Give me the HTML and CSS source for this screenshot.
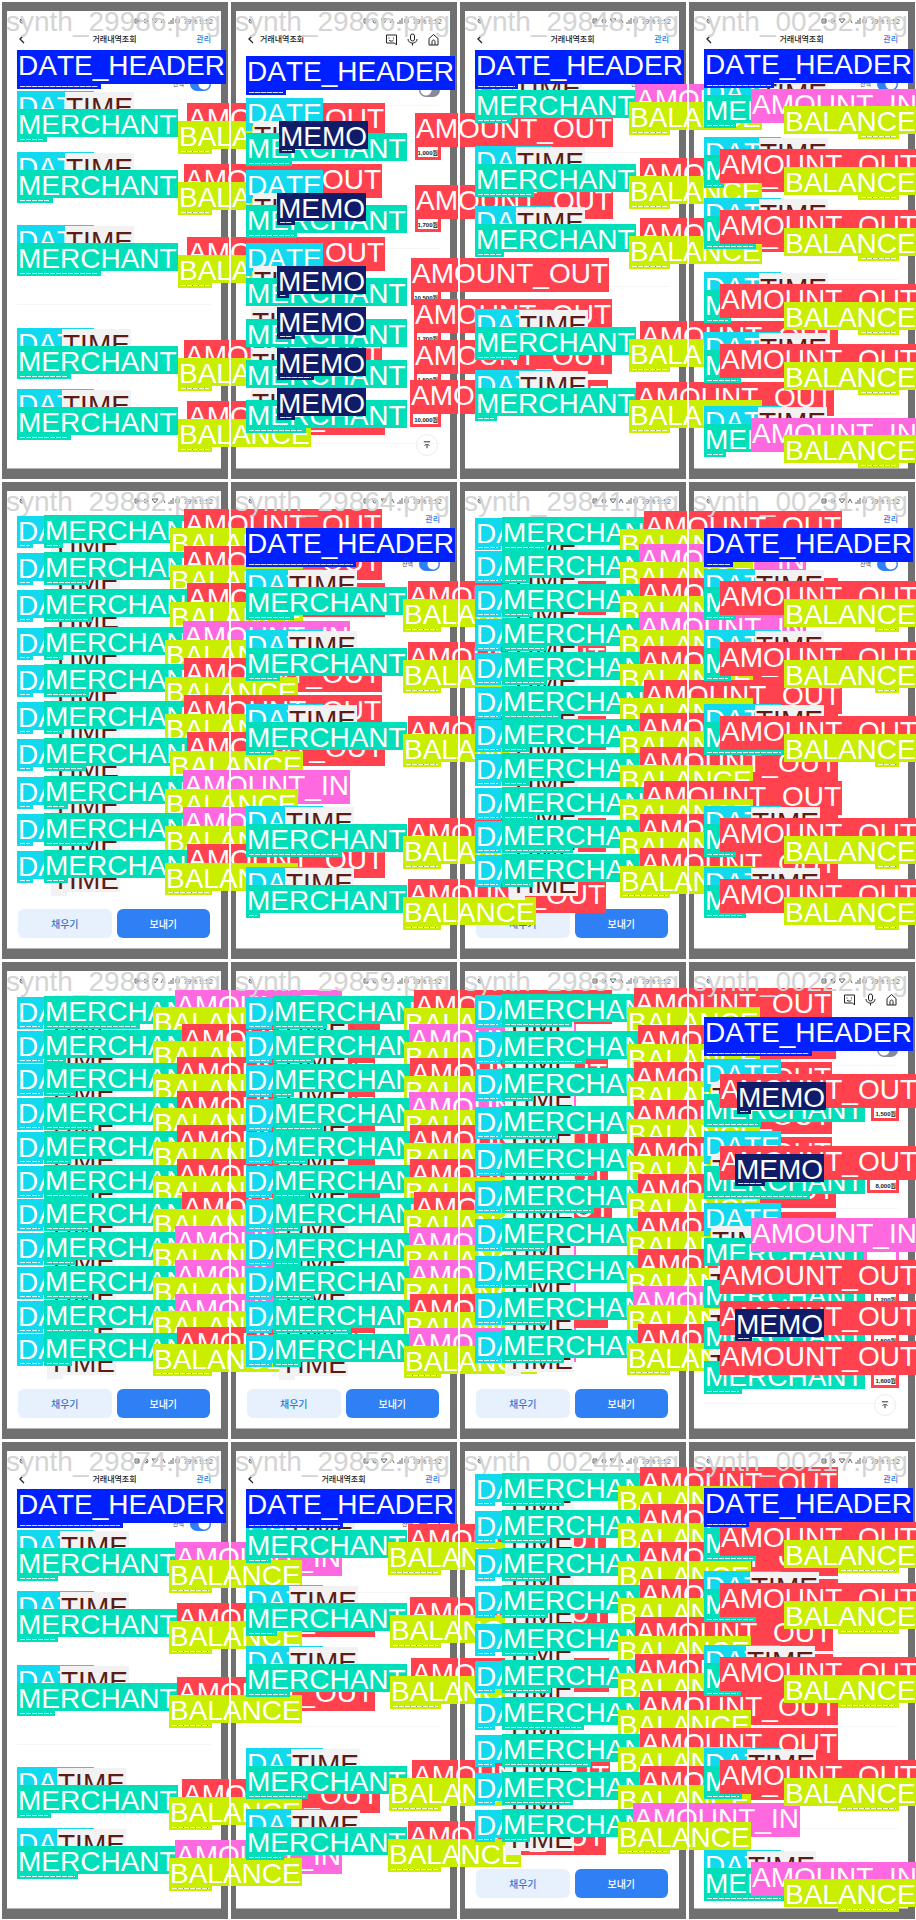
FILE: index.html
```html
<!DOCTYPE html>
<html lang="ko">
<head>
<meta charset="utf-8">
<meta name="viewport" content="width=device-width, initial-scale=1">
<title>거래내역조회</title>
<link rel="stylesheet" href="styles.css">
</head>
<body>
<main class="sheet" id="sheet"></main>
<script src="script.js"></script>
</body>
</html>
```

FILE: styles.css
```css
* { box-sizing: border-box; }
body {
  margin: 0;
  background: #fff;
  font-family: "Liberation Sans", "Noto Sans CJK KR", sans-serif;
}
.sheet {
  display: grid;
  grid-template-columns: repeat(4, 1fr);
  overflow: hidden;
}
.tile {
  position: relative;
  display: flex;
  aspect-ratio: 229 / 480;
  padding: 2px 1px 1px 2px;
}
.tile::after {
  content: "";
  position: absolute;
  z-index: 2;
  top: 0;
  bottom: 0;
  left: 0;
  width: 2px;
  background: #fff;
}
.frame {
  display: flex;
  flex: 1;
  padding: 9px 7px 10px 5px;
  background: #707070;
}
.phone {
  position: relative;
  display: flex;
  flex: 1;
  flex-direction: column;
  background: #fff;
  border-bottom: 1px solid #b4b4b4;
}
.status {
  display: flex;
  align-items: center;
  justify-content: space-between;
  height: 20px;
  padding: 0 8px 0 12px;
  color: #666;
  font-size: 7px;
}
.status-right { display: flex; align-items: center; gap: 3px; }
.status svg { width: 6px; height: 6px; }
.status .signal { width: 28px; }
.appbar {
  display: grid;
  grid-template-columns: 1fr auto 1fr;
  align-items: center;
  height: 16px;
  padding: 0 10px 0 11px;
  color: #222;
}
.appbar.wide { grid-template-columns: auto 1fr auto; gap: 5px; }
.appbar h2 {
  margin: 0;
  font: 500 8px/12px "Noto Sans CJK KR", sans-serif;
}
.back, .tool, .totop {
  display: flex;
  padding: 0;
  border: 0;
  background: none;
  color: inherit;
}
.back svg { width: 8px; height: 10px; }
.tools { display: flex; gap: 8px; }
.tool svg { width: 13px; height: 13px; }
.manage {
  justify-self: end;
  color: #2f7be8;
  font: 500 8px/12px "Noto Sans CJK KR", sans-serif;
  text-decoration: none;
}
.filter {
  display: flex;
  align-items: center;
  justify-content: flex-end;
  gap: 6px;
  height: 14px;
  margin-top: 30px;
  padding-right: 10px;
  color: #444;
  font: 6px/8px "Noto Sans CJK KR", sans-serif;
}
.wide + .filter { margin-top: 36px; }
.filter input {
  appearance: none;
  width: 21px;
  height: 14px;
  margin: 0;
  border-radius: 7px;
  background: radial-gradient(circle at 7px 7px, #fff 5px, #858b98 6px);
}
.filter input:checked { background: radial-gradient(circle at 14px 7px, #fff 5px, #2f80f4 6px); }
.rule {
  position: absolute;
  left: 10px;
  right: 10px;
  height: 1px;
  margin: 0;
  border: 0;
  background: #f6f6f7;
}
.actions {
  display: grid;
  grid-template-columns: 1fr 1fr;
  gap: 5px;
  margin-top: auto;
  padding: 0 11px 10px;
}
.actions button {
  height: 29px;
  padding: 0;
  border: 0;
  border-radius: 6px;
  background: #e6f1fd;
  color: #2f74d8;
  font: 500 10px/14px "Noto Sans CJK KR", sans-serif;
}
.actions .send { background: #3080f5; color: #fff; }
.totop {
  align-items: center;
  justify-content: center;
  width: 22px;
  height: 22px;
  margin: auto 12px 12px auto;
  border: 1px solid #ececec;
  border-radius: 50%;
}
.totop svg { width: 8px; height: 8px; }
.marks {
  position: absolute;
  z-index: 1;
  inset: 0;
}
.name {
  position: absolute;
  top: 5px;
  left: 6px;
  margin: 0;
  color: #d4d4d4;
  font-size: 28px;
  font-kerning: none;
  font-weight: 400;
  line-height: 34px;
  white-space: nowrap;
}
.tag, .box { position: absolute; }
.tag {
  height: 28px;
  padding: 4px 1px 0;
  color: #fff;
  font-size: 28px;
  font-kerning: none;
  line-height: 24px;
  white-space: nowrap;
}
.tall { height: 34px; }
.header { background: #0020ff; }
.date { background: #12d9ee; }
.time { background: #f2f2f2; color: #5a1c14; }
.merchant { background: #00dfb9; }
.out { background: #ff424e; }
.in { background: #ff69df; }
.balance { background: #c9ee00; }
.memo { background: #101c68; }
.box::after {
  content: "";
  position: absolute;
  right: 3px;
  bottom: 2px;
  left: 3px;
  height: 1px;
  background: repeating-linear-gradient(90deg, #fff 0 5px, #7a8a8a 5px 6px);
  opacity: 0.85;
}
.box.time::after { display: none; }
.box.sum {
  display: flex;
  align-items: flex-end;
  justify-content: flex-end;
  border: 3px solid #ff424e;
  border-top-width: 0;
  background: #fff;
  color: #222;
  font: 700 6px/7px "Liberation Sans", "Noto Sans CJK KR", sans-serif;
  white-space: nowrap;
  overflow: hidden;
}
.box.sum.in { border-color: #ff69df; }
.box.sum::after { display: none; }
```

FILE: script.js
```js
const O = 'out', I = 'in';
const TEXT = {
  header: 'DATE_HEADER', date: 'DATE', time: 'TIME', merchant: 'MERCHANT',
  out: 'AMOUNT_OUT', in: 'AMOUNT_IN', balance: 'BALANCE', memo: 'MEMO'
};

/* head: [y, box width]
   list rows:    [merchant y, time x, merchant box width, type, amount x, balance x]
   compact rows: [merchant y, merchant box width, type, amount x, balance x]
   memo rows:    [merchant y, merchant box width, type, amount x, amount, memo x, memo box width, has date] */
const tiles = [
  { name: '29986', kind: 'list', bar: 1, head: [50, 84], rules: [304], rows: [
    [109, 65, 30, O, 187, 178], [170, 65, 36, O, 184, 178], [243, 65, 84, O, 187, 178],
    [346, 62, 54, O, 184, 178], [407, 62, 54, O, 187, 178]] },
  { name: '29866', kind: 'memo', bar: 1, head: [56, 40], rules: [105, 136, 207, 248, 443], rows: [
    [133, 46, O, 186, '1,000원', 50, 16, 1], [205, 51, O, 186, '1,700원', 48, 18, 1], [278, 0, O, 182, '10,500원', 48, 12, 1],
    [319, 0, O, 185, '1,200원', 48, 18, 0], [360, 0, O, 185, '1,500원', 48, 37, 0], [400, 60, O, 181, '10,000원', 48, 18, 0]] },
  { name: '29848', kind: 'list', bar: 1, head: [50, 43], rules: [152, 286], rows: [
    [90, 55, 36, I, 177, 171], [164, 58, 59, O, 182, 171], [224, 58, 29, O, 182, 171],
    [327, 61, 44, O, 182, 171], [388, 61, 22, O, 178, 171]] },
  { name: '00232', kind: 'list', bar: 1, head: [49, 70], rules: [279, 413], edge: 1, rows: [
    [95, 72, 32, I, 64, 171], [155, 72, 20, O, 33, 171], [216, 72, 52, O, 33, 171],
    [290, 72, 27, O, 33, 171], [350, 72, 37, O, 33, 171], [424, 71, 22, I, 64, 171]] },

  { name: '29882', kind: 'compact', timeX: 51, dateW: 16, drop: 19, rows: [
    [35, 19, O, 184, 170], [72, 45, O, 184, 170], [109, 48, O, 187, 170], [147, 19, I, 183, 165],
    [184, 45, O, 184, 165], [221, 20, O, 184, 165], [258, 42, O, 187, 170], [296, 24, I, 183, 165],
    [333, 47, I, 183, 165], [370, 24, O, 187, 165]] },
  { name: '29864', kind: 'list', bar: 1, head: [48, 110], rows: [
    [107, 59, 48, O, 179, 174], [168, 59, 34, O, 179, 174], [242, 59, 28, O, 179, 174],
    [344, 56, 96, O, 179, 174], [405, 56, 14, O, 179, 174]] },
  { name: '29841', kind: 'compact', timeX: 51, dateW: 26, drop: 18, rows: [
    [37, 45, O, 186, 162], [70, 27, I, 181, 162], [104, 31, O, 182, 162], [138, 45, I, 181, 162],
    [172, 45, O, 182, 162], [206, 59, O, 186, 162], [239, 27, O, 182, 162], [273, 27, O, 182, 162],
    [307, 34, O, 186, 162], [340, 71, O, 182, 162], [374, 31, O, 182, 162]] },
  { name: '00231', kind: 'list', bar: 1, head: [48, 29], edge: 1, rows: [
    [107, 68, 32, O, 33, 188], [168, 68, 27, O, 33, 188], [242, 68, 80, O, 33, 188],
    [344, 64, 32, O, 33, 188], [405, 64, 42, O, 33, 188]] },

  { name: '29880', kind: 'compact', timeX: 47, dateW: 26, drop: 17, rows: [
    [36, 96, I, 175, 153], [70, 22, O, 182, 153], [103, 32, O, 177, 153], [137, 50, O, 177, 153],
    [171, 27, O, 177, 153], [205, 48, O, 177, 153], [238, 47, O, 182, 153], [272, 32, I, 175, 153],
    [306, 48, I, 175, 153], [340, 50, I, 175, 153], [373, 28, O, 177, 153]] },
  { name: '29859', kind: 'compact', timeX: 50, dateW: 26, drop: 18, rows: [
    [36, 54, O, 185, 175], [70, 41, I, 180, 175], [104, 21, O, 181, 175], [138, 50, I, 180, 175],
    [171, 35, O, 181, 175], [205, 36, O, 181, 175], [238, 28, O, 185, 175], [273, 28, I, 180, 175],
    [306, 41, I, 180, 175], [340, 78, O, 181, 175], [374, 28, I, 180, 175]] },
  { name: '29833', kind: 'compact', timeX: 47, dateW: 26, drop: 19, rows: [
    [34, 70, O, 176, 169], [71, 84, O, 180, 169], [108, 32, O, 176, 169], [146, 56, O, 176, 169],
    [183, 92, O, 176, 169], [220, 92, O, 180, 169], [258, 45, O, 180, 169], [295, 30, O, 180, 169],
    [332, 47, I, 175, 169], [370, 62, O, 180, 169]] },
  { name: '00222', kind: 'memo', bar: 1, head: [57, 108], rules: [105, 248, 443], edge: 1, rows: [
    [134, 57, O, 184, '1,500원', 50, 14, 1], [206, 106, O, 180, '8,000원', 48, 30, 1], [278, 0, I, 177, '', 0, 0, 1],
    [320, 0, O, 184, '1,200원', 0, 0, 0], [361, 0, O, 184, '1,500원', 48, 17, 0], [401, 38, O, 184, '1,600원', 0, 0, 0]] },

  { name: '29874', kind: 'list', bar: 1, head: [49, 106], rules: [304], rows: [
    [108, 60, 41, I, 175, 169], [169, 60, 41, O, 177, 169], [243, 60, 38, O, 177, 169],
    [345, 57, 34, O, 182, 169], [406, 57, 61, I, 175, 169]] },
  { name: '29852', kind: 'list', bar: 1, head: [49, 97], rules: [152, 286], rows: [
    [90, 57, 25, O, 179, 159], [163, 60, 31, O, 181, 161], [224, 60, 44, O, 182, 161],
    [326, 62, 62, O, 183, 160], [387, 62, 38, O, 179, 159]] },
  { name: '00244', kind: 'compact', timeX: 47, dateW: 20, drop: 19, rows: [
    [33, 62, O, 182, 160], [70, 48, O, 182, 160], [108, 47, O, 182, 160], [145, 46, O, 182, 160],
    [183, 35, O, 177, 160], [220, 49, O, 177, 160], [257, 82, O, 182, 160], [294, 89, O, 182, 160],
    [332, 71, O, 182, 160], [369, 28, I, 175, 160]] },
  { name: '00217', kind: 'list', bar: 1, head: [48, 45], rules: [212, 286, 388], edge: 1, rows: [
    [88, 60, 52, O, 33, 151], [149, 63, 52, O, 33, 151], [223, 59, 37, O, 33, 151],
    [326, 60, 38, O, 33, 151], [428, 60, 80, I, 64, 151]] }
];

const svg = (box, body) => `<svg viewBox="0 0 ${box}" fill="none" stroke="currentColor" aria-hidden="true">${body}</svg>`;
const backIcon = svg('8 10', '<path d="M6 1 2 5l4 4" stroke-width="1.3"/>');
const chatIcon = svg('26 26', '<path d="M3 4h20v20l-4-4H3z" stroke-width="2" stroke-linejoin="round"/><path d="M8 9v2m9-2v2m-9 3c2 3 7 3 9 0" stroke-width="2"/>');
const micIcon = svg('26 26', '<rect x="9" y="2" width="8" height="14" rx="4" stroke-width="2"/><path d="M4 12c0 11 18 11 18 0M13 20v5" stroke-width="2"/>');
const homeIcon = svg('26 26', '<path d="M4 11l9-8 9 8v13H4zM10 24v-7c0-4 6-4 6 0v7" stroke-width="2" stroke-linejoin="round"/>');
const topIcon = svg('10 10', '<path d="M1 1h8M5 9V3M2 6l3-3 3 3"/>');
const bellIcon = svg('6 6', '<circle cx="3" cy="3" r="2"/><path d="M1 1l4 4"/>');
const cardIcon = svg('6 6', '<path d="M1 1h4v4H1zM2 3h3"/>');
const signalIcon = '<svg class="signal" viewBox="0 0 28 6" fill="none" stroke="currentColor" aria-hidden="true"><path d="M0 1l3 4 3-4zM9 5l2-4 2 4M17 6V4m2 2V2m2 4V0M24 1h3v4h-3z"/></svg>';

function tag(type, x, y) {
  const tall = TEXT[type].includes('_') ? ' tall' : '';
  return `<span class="tag ${type}${tall}" style="left:${x}px;top:${y}px">${TEXT[type]}</span>`;
}
function box(type, x, y, w, h) {
  return w > 0 ? `<i class="box ${type}" style="left:${x}px;top:${y}px;width:${w}px;height:${h}px"></i>` : '';
}

const draw = {
  list(t) {
    return t.rows.map(([y, tx, mw, kind, ax, bx]) => {
      const by = y + (kind === I && t.edge ? 11 : 12);
      return tag('date', 17, y - 18) + tag('time', tx, y - 17) +
        box('merchant', 17, y, mw, 33) + tag('merchant', 17, y) + tag(kind, ax, y - 6) +
        box('balance', bx, by, 212 - bx, 33) + tag('balance', t.edge ? 97 : bx, by);
    }).join('');
  },
  compact(t) {
    return t.rows.map(([y, mw, kind, ax, bx]) => {
      const by = y - 6 + t.drop;
      return box('date', 17, y + 1, t.dateW, 32) + tag('date', 17, y + 1) +
        box('time', t.timeX, y + 14, 16, 32) + tag('time', t.timeX, y + 14) +
        box('merchant', 44, y, mw, 33) + tag('merchant', 44, y) + tag(kind, ax, y - 6) +
        box('balance', bx, by, 212 - bx, 32) + tag('balance', bx, by);
    }).join('');
  },
  memo(t) {
    return t.rows.map(([y, mw, kind, ax, sum, mx, memoW, dated]) => {
      const labelX = t.edge ? (kind === I ? 64 : 33) : ax;
      const ay = y - 20;
      return (dated ? box('date', 17, y - 35, 6, 33) + tag('date', 17, y - 35) : '') +
        tag('time', dated ? 24 : 22, y - 12) + box('merchant', 17, y, mw, 33) + tag('merchant', 17, y) +
        `<i class="box sum ${kind}" style="left:${ax}px;top:${ay}px;width:${212 - ax}px;height:47px">${sum}</i>` +
        tag(kind, labelX, ay) +
        (mx ? box('memo', mx, y - 12, memoW, 32) + tag('memo', mx, y - 12) : '');
    }).join('');
  }
};

function screen(t, i) {
  const memo = t.kind === 'memo';
  const back = `<button class="back" aria-label="뒤로">${backIcon}</button>`;
  const status = `<div class="status"><span>${bellIcon}</span><span class="status-right">${cardIcon}${bellIcon}${signalIcon}<span>79% 9:52</span></span></div>`;
  let bar = '';
  if (memo) {
    bar = `<header class="appbar wide">${back}<h2>거래내역조회</h2><div class="tools">
      <button class="tool" aria-label="상담">${chatIcon}</button><button class="tool" aria-label="음성">${micIcon}</button><button class="tool" aria-label="홈">${homeIcon}</button></div></header>
      <label class="filter"><input type="checkbox" aria-label="잔액"></label>`;
  } else if (t.bar) {
    bar = `<header class="appbar">${back}<h2>거래내역조회</h2><a class="manage" href="#t${i}">관리</a></header>
      <label class="filter">잔액<input type="checkbox" checked></label>`;
  }
  const rules = (t.rules || []).map(y => `<hr class="rule" style="top:${y - 11}px">`).join('');
  const foot = t.kind === 'compact'
    ? '<div class="actions"><button>채우기</button><button class="send">보내기</button></div>'
    : memo ? `<button class="totop" aria-label="맨 위로">${topIcon}</button>` : '';
  return `<div class="frame"><div class="phone">${status}${bar}${rules}${foot}</div></div>`;
}

document.getElementById('sheet').innerHTML = tiles.map((t, i) => {
  const head = t.head ? box('header', 17, t.head[0], t.head[1], 39) + tag('header', 17, t.head[0]) : '';
  return `<section class="tile" id="t${i}">${screen(t, i)}
    <div class="marks"><h1 class="name">synth_${t.name}.png</h1>${draw[t.kind](t)}${head}</div></section>`;
}).join('');
```
